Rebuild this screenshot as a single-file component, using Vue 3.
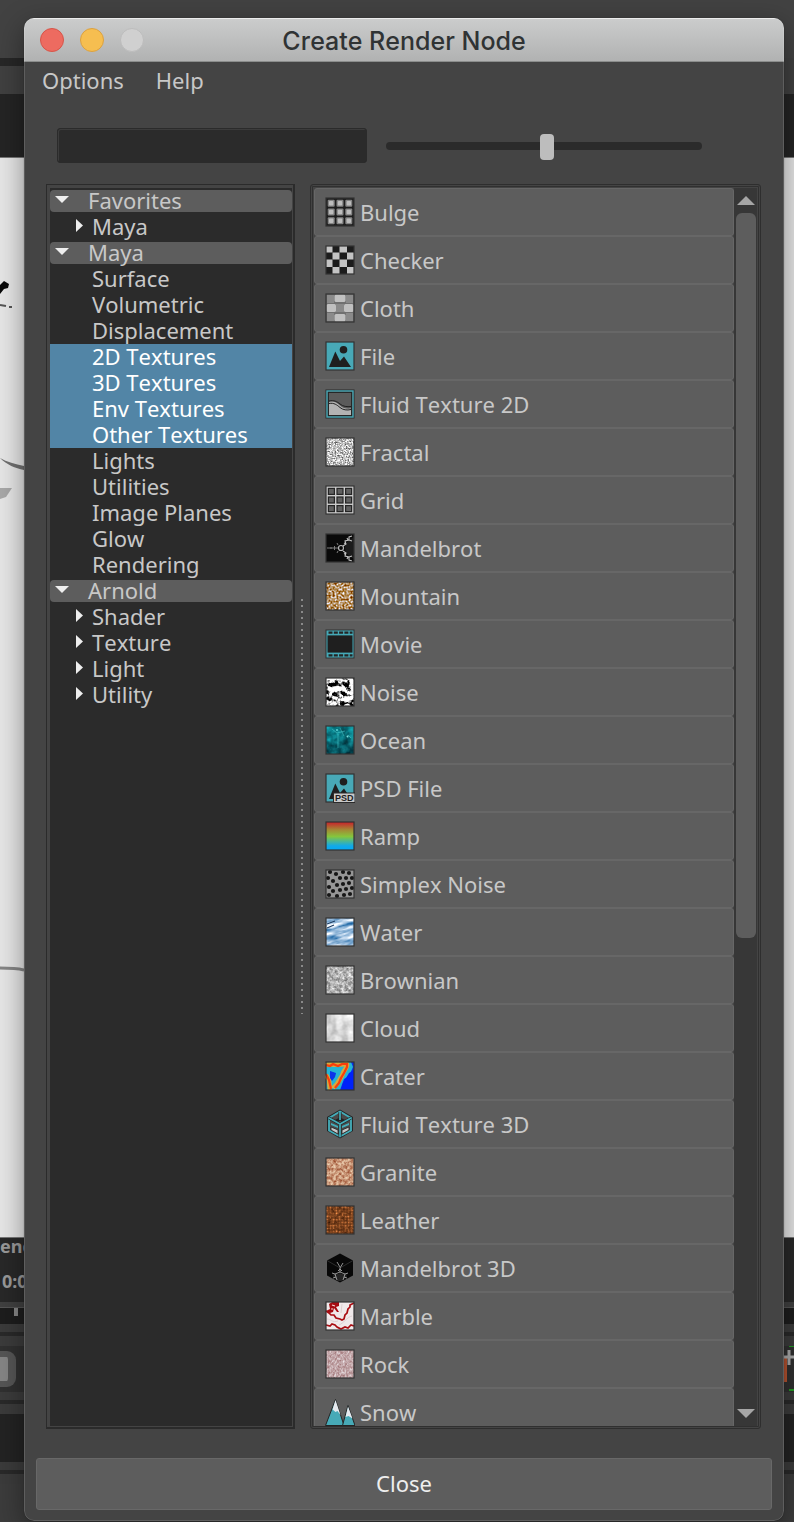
<script setup>
import { ref } from 'vue'

const query = ref('')
const iconSize = ref(51)

const tree = [
  { label: 'Favorites', kind: 'head' },
  { label: 'Maya', kind: 'branch' },
  { label: 'Maya', kind: 'head' },
  { label: 'Surface', kind: 'leaf' },
  { label: 'Volumetric', kind: 'leaf' },
  { label: 'Displacement', kind: 'leaf' },
  { label: '2D Textures', kind: 'leaf', selected: true },
  { label: '3D Textures', kind: 'leaf', selected: true },
  { label: 'Env Textures', kind: 'leaf', selected: true },
  { label: 'Other Textures', kind: 'leaf', selected: true },
  { label: 'Lights', kind: 'leaf' },
  { label: 'Utilities', kind: 'leaf' },
  { label: 'Image Planes', kind: 'leaf' },
  { label: 'Glow', kind: 'leaf' },
  { label: 'Rendering', kind: 'leaf' },
  { label: 'Arnold', kind: 'head' },
  { label: 'Shader', kind: 'branch' },
  { label: 'Texture', kind: 'branch' },
  { label: 'Light', kind: 'branch' },
  { label: 'Utility', kind: 'branch' }
]

const frame = '<rect x="1" y="1" width="28" height="28" fill="none" stroke="#333" stroke-width="1.2"/>'
const square = (fill) => `<rect x="1" y="1" width="28" height="28" fill="${fill}"/>`
const noise = (id) => `<rect x="1" y="1" width="28" height="28" filter="url(#${id})"/>${frame}`
const grid3 = (draw) => [0, 1, 2].flatMap((r) => [0, 1, 2].map((c) => draw(c, r))).join('')

const checker = () => {
  const xs = [1, 7.5, 14.5, 22, 29]
  let out = square('#1c1c1c')
  for (let r = 0; r < 4; r++)
    for (let c = 0; c < 4; c++)
      if ((r + c) % 2 === 0)
        out += `<rect x="${xs[c]}" y="${xs[r]}" width="${xs[c + 1] - xs[c]}" height="${xs[r + 1] - xs[r]}" fill="#c4c4c4"/>`
  return out + frame
}

const simplexDots = () => {
  const pts = [[5, 3], [11, 5], [18, 3], [24, 4], [3, 9], [8, 12], [15, 9], [21, 9], [27, 9], [12, 16], [4, 18], [18, 15], [24, 14], [8, 22], [15, 21], [21, 20], [27, 19], [4, 26], [12, 27], [19, 26], [25, 25]]
  return square('#969696') + '<g filter="url(#soften)">' +
    pts.map(([x, y]) => `<circle cx="${x}" cy="${y}" r="2.1" fill="#181818"/>`).join('') + '</g>' + frame
}

const leather = () => {
  let out = '<rect x="1" y="1" width="28" height="28" filter="url(#tex-leather)"/>'
  for (let i = 4; i < 29; i += 3) out += `<path d="M${i} 1v28M1 ${i}h28" stroke="#51290f" stroke-width=".9" opacity=".8"/>`
  return out + frame
}

const mountains = '<circle cx="18.5" cy="8.8" r="3.8" fill="#1f1f1f"/><path d="M4 26 10.3 10.5 15 20 19 15.5 26 26Z" fill="#1f1f1f"/>'
const branchTips = 'M18 13l3-2-1-3 4-1 0-3 3-1M24 7l3 1M21 11l-2-1M22 5l1 2M18 18l3 2-1 3 4 1 0 3 3 1M24 24l3-1M21 20l-2 1M22 26l1-2'

const icons = {
  bulge: square('#1e1e1e') + grid3((c, r) => `<rect x="${2.7 + c * 8.8}" y="${2.7 + r * 8.8}" width="7" height="7" rx="1" fill="#858585"/><rect x="${4 + c * 8.8}" y="${4 + r * 8.8}" width="4.4" height="4.4" rx="1" fill="#bdbdbd"/>`) + frame,
  checker: checker(),
  cloth: square('#707070') +
    '<g fill="#8a8a8a"><rect x="2" y="2" width="7" height="8"/><rect x="21" y="2" width="7" height="8"/><rect x="11" y="11" width="8" height="8"/><rect x="2" y="20" width="7" height="8"/><rect x="21" y="20" width="7" height="8"/></g>' +
    '<g fill="#c0c0c0"><rect x="9.5" y="1.5" width="11" height="7.5" rx="1.5"/><rect x="1.5" y="11" width="9.5" height="8" rx="1.5"/><rect x="19" y="11" width="9.5" height="8" rx="1.5"/><rect x="9.5" y="21" width="11" height="7.5" rx="1.5"/></g>' + frame,
  file: square('#48a9b7') + mountains + frame,
  fluid2d: '<rect x=".5" y=".5" width="29" height="29" fill="#2b2b2b"/><rect x="2" y="2" width="26" height="26" fill="#5b5b5b" stroke="#45a9b7" stroke-width="1.4"/><rect x="3.4" y="3.4" width="23.2" height="23.2" fill="#5b5b5b" stroke="#222"/><path d="M4 13c5-1.5 8 .5 11 3.5s7 3.5 11 3V26H4Z" fill="#b3b3b3"/><path d="M4 12c5-1 8 .5 11 3s7 3 11 2.5M4 14.5c5-1 8 1.500 11 4s7 3 11 2" fill="none" stroke="#202020" stroke-width="1"/>',
  fractal: noise('tex-fractal'),
  grid: square('#cacaca') + grid3((c, r) => `<rect x="${3.4 + c * 8.6}" y="${3.4 + r * 8.6}" width="6" height="6" fill="#606060" stroke="#252525" stroke-width="1.2"/>`) + frame,
  mandelbrot: square('#0a0a0a') + '<path d="M29 4c-6 3-9 7-9 11s3 8 9 11Z" fill="#1c1c1c"/><path d="M2 15h11M6 14v2M9.5 13v4M13 12l-1-2M13 18l-1 2" stroke="#7c7c7c" fill="none"/><circle cx="16" cy="15" r="2.5" fill="none" stroke="#b6b6b6" stroke-width="1.2"/><path d="' + branchTips + '" fill="none" stroke="#c0c0c0" stroke-width="1.1"/>' + frame,
  mountain: noise('tex-mountain'),
  movie: '<rect x=".5" y=".5" width="29" height="29" fill="#333"/><rect x="1.5" y="1.5" width="27" height="27" fill="#45a9b7"/><rect x="2.5" y="6.4" width="25" height="17.2" fill="#1f1f1f"/><path d="M3.5 3.7h24M3.5 26.300h24" stroke="#242424" stroke-width="2.2" stroke-dasharray="4 1.3"/>',
  noise: noise('tex-noise'),
  ocean: square('url(#g-ocean)') + '<rect x="1" y="1" width="28" height="28" filter="url(#tex-ocean)" opacity=".35"/><path d="M13 9v14M7 4l5 4 8-2M15 3l4 8M23 10l3 3" stroke="#55d0d0" stroke-width=".7" opacity=".7" fill="none"/><circle cx="22.5" cy="11.5" r="1" fill="#7ce3e0"/><circle cx="12" cy="5" r="1" fill="#5fd3d3"/>' + frame,
  psd: square('#48a9b7') + mountains + frame + '<rect x="8.5" y="20" width="21.5" height="9.5" fill="#c9c9c9" stroke="#2b2b2b"/><text x="19.300" y="28" text-anchor="middle" font-family="Liberation Sans, Arial, sans-serif" font-weight="bold" font-size="9" fill="#1e1e1e">PSD</text>',
  ramp: square('url(#g-ramp)') + frame,
  simplex: simplexDots(),
  water: '<svg x="1" y="1" width="28" height="28"><rect x="-8" y="-8" width="44" height="44" transform="rotate(-14 14 14)" filter="url(#tex-water)"/><path d="M1 6l8-3M1 10l7-3" stroke="#1c3d63" stroke-width="1.2"/></svg>' + frame,
  brownian: noise('tex-brownian'),
  cloud: noise('tex-cloud'),
  crater: square('#0a2df0') + '<g filter="url(#soften)"><path d="M1 1h25l2 5-4 9-5 3-4 11H1Z" fill="#25b4d4"/><path d="M1 4c5-2 8 1 12-1 3 2 7-1 9 0 1 3-3 6-4 9-1 4-4 7-6 11l-4 4M1 14l3 5 1 10" fill="none" stroke="#d9a93c" stroke-width="4.5"/><path d="M1 4l4 1 3-2 5 2 4-2 5 0 0 3-3 6-3 5-2 5-4 5M1 13l3 6 2 9" fill="none" stroke="#fa3c08" stroke-width="2.2"/><path d="M5 10l6 2-1 4-3 4-2-3Z" fill="#0734e8"/><path d="M24 12l5-3v20H16l2-7Z" fill="#0620fa"/></g>' + frame,
  fluid3d: '<path d="M15 .5 28 8v14L15 29.5 2 22V8Z" fill="#242424"/><path d="M15 2.5 26 9v12.5L15 27.5 4 21.5V9Z" fill="#4a4a4a" stroke="#43aebb" stroke-width="1.8"/><path d="M4 9l11 6 11-6M15 15v13M15 3v7M15 10 9 13M15 10l6 3" fill="none" stroke="#222" stroke-width="3"/><path d="M4 9l11 6 11-6M15 15v13M15 3v8" fill="none" stroke="#43aebb" stroke-width="1.7"/><path d="M6 18l7 3v4l-7-4ZM17 21l7-3v3l-7 4Z" fill="#c8c8c8" stroke="#222" stroke-width=".8"/><path d="M6 14l7 3v2l-7-3ZM17 17l7-3v2l-7 3Z" fill="#43aebb"/>',
  granite: noise('tex-granite'),
  leather: leather(),
  mandel3d: '<path d="M15 .5 28 7.5v15L15 29.5 2 22.5v-15Z" fill="#080808"/><path d="M2 7.5 15 15l13-7.5M15 15v6" fill="none" stroke="#2d2d2d"/><path d="M13 28c-5-3-6-6-4-7 4 0 8 0 12 0 2 1 0 5-5 7Z" fill="#242424"/><path d="M12 9l3 5M18 10l-3 5v4M15 19l-5 2 1 3-3 1M15 19l5 2-1 3 3 1M10 21l-3-1M20 21l3-1M11 24l1 3M19 24l-1 3M15 16l-2 2M15 16l2 2" fill="none" stroke="#a2a2a2" stroke-width=".9"/>',
  marble: square('#f0e9ea') + '<path d="M1 10l3 2 2 2 3 0 2 3 4 1 2 1 2-1 1-4 2-2 1-4 2-2 0-2 4-2M1 24l4 1 2-2 3 1 2 2 4 2 4-2 3 1 3-3 3 1" fill="none" stroke="#a90d12" stroke-width="1.7"/><path d="M4 3 7 1h7l0 4-3 1 3 5-2 0-3-4-1 4-3 1-4-2 4-2Z" fill="#a60c12"/><path d="M7 4l3 1M6 8l2 0" stroke="#f5dada" stroke-width="1.2"/><path d="M14 24c5-2 8-8 13-9M2 18c4 0 5 4 11 2M17 3l-1 9" fill="none" stroke="#d9c9cc" stroke-width=".8"/>' + frame,
  rock: noise('tex-rock'),
  snow: '<path d="M.5 28.5 10.5 2.5 19 28.5Z" fill="#47aab7" stroke="#242424"/><path d="M10.5 3 15.5 18l-3-4-2 1-3-2.5Z" fill="#e6e9ee"/><path d="M17.5 28.5 23 8.5l7 20Z" fill="#47aab7" stroke="#242424"/><path d="M23 9.5l4.5 12-4-2.5-3 1Z" fill="#e6e9ee"/>'
}

const nodes = [
  ['Bulge', 'bulge'], ['Checker', 'checker'], ['Cloth', 'cloth'], ['File', 'file'],
  ['Fluid Texture 2D', 'fluid2d'], ['Fractal', 'fractal'], ['Grid', 'grid'],
  ['Mandelbrot', 'mandelbrot'], ['Mountain', 'mountain'], ['Movie', 'movie'],
  ['Noise', 'noise'], ['Ocean', 'ocean'], ['PSD File', 'psd'], ['Ramp', 'ramp'],
  ['Simplex Noise', 'simplex'], ['Water', 'water'], ['Brownian', 'brownian'],
  ['Cloud', 'cloud'], ['Crater', 'crater'], ['Fluid Texture 3D', 'fluid3d'],
  ['Granite', 'granite'], ['Leather', 'leather'], ['Mandelbrot 3D', 'mandel3d'],
  ['Marble', 'marble'], ['Rock', 'rock'], ['Snow', 'snow']
]

// Each texture maps a turbulence channel linearly onto r, g and b as [gain, offset].
const textures = [
  { id: 'tex-fractal', freq: '0.7', seed: 3, rgb: [[1.4, 0.05], [1.4, 0.05], [1.4, 0.05]] },
  { id: 'tex-mountain', freq: '0.5', seed: 8, rgb: [[0.9, 0.27], [1.5, -0.17], [2.6, -0.9]] },
  { id: 'tex-noise', freq: '0.2', seed: 5, rgb: [[5, -1.75], [5, -1.75], [5, -1.75]] },
  { id: 'tex-ocean', freq: '0.12', seed: 4, rgb: [[0.5, -0.2], [2, -0.5], [2, -0.45]] },
  { id: 'tex-water', freq: '0.06 0.26', seed: 2, rgb: [[1.6, -0.18], [1.1, 0.2], [0.7, 0.52]] },
  { id: 'tex-brownian', freq: '0.3', seed: 7, rgb: [[0.9, 0.25], [0.9, 0.25], [0.9, 0.25]] },
  { id: 'tex-cloud', freq: '0.09', seed: 6, rgb: [[0.5, 0.58], [0.5, 0.58], [0.5, 0.58]] },
  { id: 'tex-granite', freq: '0.35', seed: 9, rgb: [[0.5, 0.53], [0.8, 0.18], [0.8, 0.06]] },
  { id: 'tex-leather', freq: '0.3', seed: 1, rgb: [[1.1, 0.08], [0.7, 0], [0.4, -0.03]] },
  { id: 'tex-rock', freq: '0.6 0.35', seed: 11, rgb: [[0.4, 0.56], [0.6, 0.35], [0.6, 0.36]] }
]
const matrix = (rgb) => rgb.map(([g, o]) => `${g} 0 0 0 ${o}`).join(' ') + ' 0 0 0 0 1'
</script>

<template>
  <div class="desktop">
    <svg class="defs" width="0" height="0" aria-hidden="true">
      <defs>
        <filter v-for="t in textures" :id="t.id" :key="t.id" x="0" y="0" width="1" height="1" color-interpolation-filters="sRGB">
          <feTurbulence type="fractalNoise" :baseFrequency="t.freq" numOctaves="3" :seed="t.seed" />
          <feColorMatrix type="matrix" :values="matrix(t.rgb)" />
        </filter>
        <filter id="soften"><feGaussianBlur stdDeviation="0.5" /></filter>
        <linearGradient id="g-ramp" x1="0" y1="0" x2="0" y2="1">
          <stop offset="0" stop-color="#c9202b" />
          <stop offset="0.28" stop-color="#a38a35" />
          <stop offset="0.52" stop-color="#85c63c" />
          <stop offset="0.85" stop-color="#12a9e8" />
          <stop offset="1" stop-color="#03a9f4" />
        </linearGradient>
        <linearGradient id="g-ocean" x1="0" y1="0" x2="0.4" y2="1">
          <stop offset="0" stop-color="#0b929b" />
          <stop offset="0.5" stop-color="#08757e" />
          <stop offset="1" stop-color="#033a44" />
        </linearGradient>
      </defs>
    </svg>

    <div class="backdrop" aria-hidden="true">
      <div class="band top"></div>
      <div class="band stripe"></div>
      <div class="band tools"></div>
      <div class="band dark"></div>
      <div class="canvas">
        <svg width="24" height="720" viewBox="0 0 24 720">
          <path d="M0 11 4 7l5 3-1 4-4 1-4 5Z" fill="#090909" />
          <path d="M0 31l6 1M9 33h3" stroke="#555" stroke-width="2" />
          <path d="M0 184c7 4 15 6 24 8v4c-9-2-17-5-24-12Z" fill="#707070" />
          <path d="M0 214l12 0-6 9-6 2Z" fill="#a8a8a8" />
          <path d="M0 694c8 0 16 0 24 2" stroke="#858585" stroke-width="3" fill="none" />
        </svg>
      </div>
      <div class="status"><span>end</span><span class="time">0:0</span></div>
      <div class="band line"></div>
      <div class="band ticks"><i></i></div>
      <div class="band groove"></div>
      <div class="band shelf"><i class="knob"></i><span class="gizmo"><svg width="10" height="46" viewBox="0 0 10 46"><path d="M0 0v36h3V10H0" fill="#b65330" /><path d="M5 0h5M5 44h5" stroke="#229b24" stroke-width="2" /><path d="M0 11h10M5 4v15" stroke="#aaa" stroke-width="3" /></svg></span></div>
      <div class="band groove"></div>
      <div class="band deep"></div>
      <div class="band groove"></div>
      <div class="band rest"></div>
    </div>

    <main class="window">
      <header class="titlebar">
        <div class="lights">
          <button type="button" class="light red" aria-label="Close window"></button>
          <button type="button" class="light amber" aria-label="Minimize window"></button>
          <button type="button" class="light grey" aria-label="Zoom window" disabled></button>
        </div>
        <h1>Create Render Node</h1>
      </header>

      <nav class="menubar">
        <button type="button">Options</button>
        <button type="button">Help</button>
      </nav>

      <div class="filters">
        <input v-model="query" class="search" type="text" aria-label="Search nodes" />
        <input v-model="iconSize" class="slider" type="range" min="0" max="100" aria-label="Icon size" />
      </div>

      <div class="panes">
        <section class="tree-pane">
          <ul class="tree">
            <li v-for="(item, i) in tree" :key="i">
              <button type="button" :class="[item.kind, { selected: item.selected }]">
                <svg v-if="item.kind === 'head'" class="arrow" width="14" height="8" viewBox="0 0 14 8"><path d="M0 0h14L7 7Z" fill="#eee" /></svg>
                <svg v-else-if="item.kind === 'branch'" class="arrow" width="8" height="14" viewBox="0 0 8 14"><path d="M0 0v13L7 6.500Z" fill="#eee" /></svg>
                <span>{{ item.label }}</span>
              </button>
            </li>
          </ul>
        </section>

        <div class="splitter"></div>

        <section class="node-pane">
          <ul class="nodes">
            <li v-for="[label, icon] in nodes" :key="label">
              <button type="button" class="node">
                <svg width="30" height="30" viewBox="0 0 30 30" aria-hidden="true" v-html="icons[icon]"></svg>
                <span>{{ label }}</span>
              </button>
            </li>
          </ul>
          <div class="scrollbar">
            <button type="button" aria-label="Scroll up"><svg width="18" height="9" viewBox="0 0 18 9"><path d="M0 9h18L9 0Z" fill="#a6a6a6" /></svg></button>
            <div class="rail"><div class="thumb"></div></div>
            <button type="button" aria-label="Scroll down"><svg width="18" height="9" viewBox="0 0 18 9"><path d="M0 0h18L9 9Z" fill="#a6a6a6" /></svg></button>
          </div>
        </section>
      </div>

      <footer class="footer">
        <button type="button" class="close">Close</button>
      </footer>
    </main>
  </div>
</template>

<style>
body {
  background: #3d3d3d;
}
</style>

<style scoped>
* {
  box-sizing: border-box;
}

.desktop {
  position: relative;
  height: 100vh;
  padding: 18px 10px 1px 24px;
  overflow: hidden;
  font-family: "Noto Sans", "Open Sans", sans-serif;
  font-size: 22px;
  font-kerning: none;
  line-height: 26px;
  color: #c8c8c8;
}

.defs {
  position: absolute;
}

button {
  margin: 0;
  padding: 0;
  border: 0;
  background: none;
  color: inherit;
  font: inherit;
  font-kerning: inherit;
  text-align: left;
}

ul {
  margin: 0;
  padding: 0;
  list-style: none;
}

.backdrop {
  position: absolute;
  inset: 0;
  display: flex;
  flex-direction: column;
}

.band { flex: none; }
.top { height: 58px; background: #424242; }
.stripe { height: 8px; background: linear-gradient(90deg, #272727 50%, #404040 50%); }
.tools { height: 28px; background: #404040; }
.dark { height: 63px; background: #242424; }

.canvas {
  flex: 1;
  padding-top: 116px;
  border-top: 1px solid #777;
  border-bottom: 1px solid #777;
  background: #e6e6e6;
}

.canvas svg { display: block; }

.status {
  display: flex;
  flex-direction: column;
  flex: none;
  height: 64px;
  background: #282828;
  color: #999;
  font-size: 18px;
  font-weight: bold;
  line-height: 16px;
}

.status .time { padding: 19px 0 0 2px; }
.line { height: 6px; border-bottom: 1px solid #555; background: #404040; }
.ticks { height: 16px; padding-left: 14px; background: #1d1d1d; }
.ticks i { display: block; width: 4px; height: 8px; background: #858585; }
.groove { height: 22px; border-top: 8px solid #3b3b3b; border-bottom: 10px solid #3b3b3b; background: #292929; }

.shelf {
  display: flex;
  align-items: center;
  justify-content: space-between;
  height: 46px;
  background: #303030;
}

.knob {
  width: 16px;
  height: 36px;
  border: solid #555;
  border-width: 6px 8px 6px 0;
  border-radius: 0 9px 9px 0;
  background: #858585;
}

.gizmo svg { display: block; }
.deep { height: 48px; background: #232323; }
.rest { height: 38px; background: #3c3c3c; }

.window {
  position: relative;
  display: flex;
  flex-direction: column;
  height: 100%;
  overflow: hidden;
  border-radius: 10px;
  background: #444;
  box-shadow: 0 0 1px rgba(0, 0, 0, 0.5), 0 8px 28px rgba(0, 0, 0, 0.4);
}

.window::after {
  position: absolute;
  inset: 0;
  border: 1px solid rgba(255, 255, 255, 0.14);
  border-radius: 10px;
  content: "";
  pointer-events: none;
}

.titlebar {
  display: grid;
  grid-template-columns: 1fr auto 1fr;
  align-items: center;
  flex: none;
  height: 44px;
  padding: 0 16px;
  border-top: 1px solid #e8e8e8;
  border-bottom: 1px solid #8b8d8c;
  background: linear-gradient(#cbcccc, #b1b2b2);
}

.lights {
  display: flex;
  gap: 16px;
}

.light {
  width: 24px;
  height: 24px;
  border: 1px solid;
  border-radius: 50%;
}

.red { border-color: #d65549; background: #ed6b60; }
.amber { border-color: #dba140; background: #f6be50; }
.grey { border-color: #bcbcbc; background: #d0d0d0; }

h1 {
  margin: 0;
  padding-top: 2px;
  color: #303334;
  font-family: Inter, "Liberation Sans", sans-serif;
  font-size: 25px;
  font-weight: 500;
  line-height: 32px;
}

.menubar {
  display: flex;
  flex: none;
  gap: 32px;
  height: 66px;
  padding: 5px 18px;
  align-items: flex-start;
}

.filters {
  display: grid;
  grid-template-columns: 310fr 316fr;
  gap: 19px;
  align-items: center;
  flex: none;
  height: 35px;
  margin: 0 82px 21px 33px;
}

.search {
  width: 100%;
  height: 35px;
  padding: 0 6px;
  border: 1px solid #2b2b2b;
  border-radius: 3px;
  outline: 0;
  background: #2b2b2b;
  box-shadow: inset 1px 1px #3c3c3c;
  color: #c8c8c8;
  font: inherit;
}

.slider {
  width: 100%;
  height: 26px;
  margin: 0;
  appearance: none;
  background: none;
}

.slider::-webkit-slider-runnable-track {
  height: 8px;
  border-radius: 4px;
  background: #2b2b2b;
}

.slider::-webkit-slider-thumb {
  width: 14px;
  height: 26px;
  margin-top: -8px;
  appearance: none;
  border-radius: 4px;
  background: #bdbdbd;
}

.panes {
  display: grid;
  grid-template-columns: 249fr 15px 451fr;
  grid-template-rows: minmax(0, 1fr);
  flex: 1;
  min-height: 0;
  margin: 0 23px 0 22px;
}

.tree-pane {
  padding: 3px 1px 1px 3px;
  border: solid #2b2b2b;
  border-width: 1px 2px 2px 1px;
}

.tree {
  height: 100%;
  overflow: hidden;
  background: #2b2b2b;
}

.tree button {
  display: flex;
  align-items: center;
  width: 100%;
  height: 26px;
  padding: 0 0 2px 42px;
  white-space: nowrap;
}

.tree .head {
  height: 22px;
  margin: 2px 0;
  padding-left: 5px;
  gap: 19px;
  border-radius: 4px;
  background: #5d5d5d;
}

.tree .branch {
  padding-left: 26px;
  gap: 8px;
}

.arrow {
  flex: none;
}

.tree .selected {
  background: #5285a6;
  color: #fff;
}

.splitter {
  align-self: center;
  width: 2px;
  height: 33.4%;
  margin-left: 6px;
  background: repeating-linear-gradient(#8a8a8a 0 2px, transparent 2px 6px);
}

.node-pane {
  display: flex;
  padding: 3px 3px 2px;
  border: 1px solid #2e2e2e;
  border-radius: 3px;
  box-shadow: inset 0 0 0 1px #444, inset 0 0 0 2px #303030;
}

.nodes {
  flex: 1;
  min-width: 0;
  overflow: hidden;
  background: #444;
}

.node {
  display: flex;
  align-items: center;
  gap: 5px;
  width: 100%;
  height: 48px;
  padding: 0 10px;
  border: 1px solid #676767;
  border-radius: 3px;
  background: #5d5d5d;
  white-space: nowrap;
}

.node svg {
  flex: none;
}

.scrollbar {
  display: flex;
  flex-direction: column;
  flex: none;
  width: 23px;
  background: #373737;
}

.scrollbar button {
  display: grid;
  place-items: center;
  height: 25px;
}

.rail {
  flex: 1;
  padding: 0 1px 0 2px;
}

.thumb {
  height: 61%;
  border-radius: 6px;
  background: #5d5d5d;
}

.footer {
  flex: none;
  padding: 29px 12px 11px;
}

.close {
  width: 100%;
  height: 52px;
  padding-bottom: 2px;
  border: 1px solid #686868;
  border-radius: 3px;
  background: #5d5d5d;
  color: #eee;
  text-align: center;
}
</style>
